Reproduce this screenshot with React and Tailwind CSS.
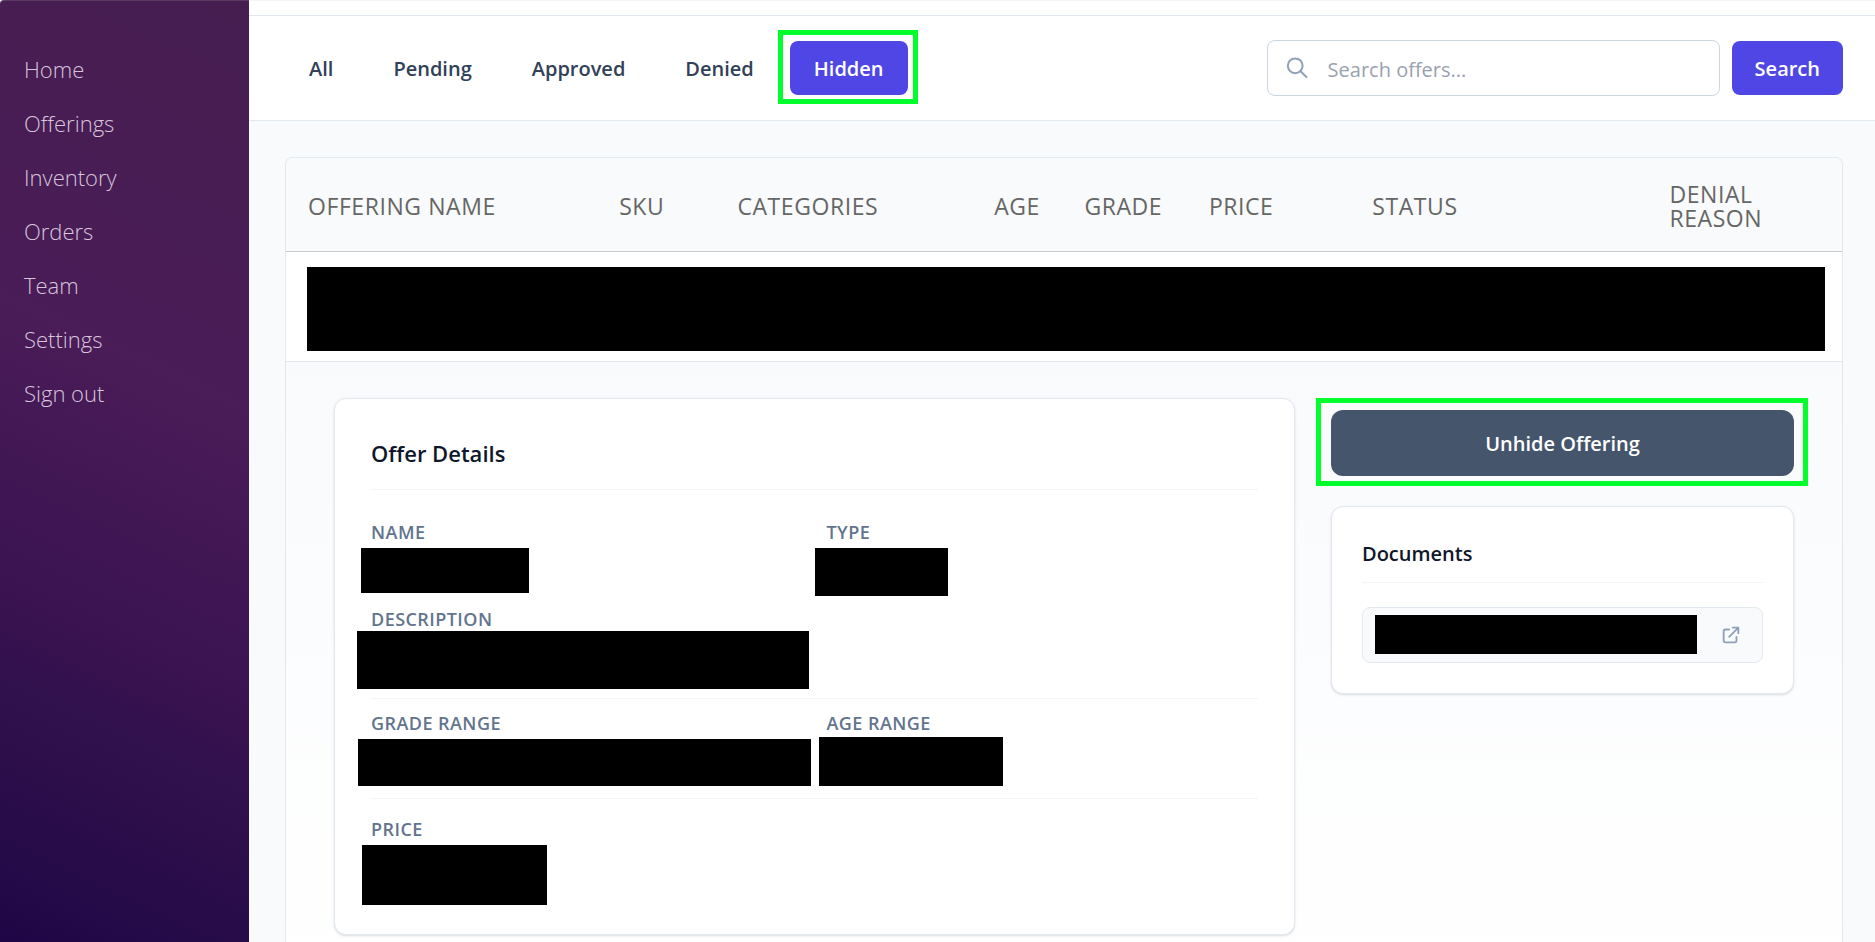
import React from "react";

const navItems = ["Home", "Offerings", "Inventory", "Orders", "Team", "Settings", "Sign out"];
const tabs = ["All", "Pending", "Approved", "Denied", "Hidden"];

const columns = [
  { label: "Offering name", width: "w-[20%]" },
  { label: "SKU", width: "w-[7.6%]" },
  { label: "Categories", width: "w-[16.5%]" },
  { label: "Age", width: "w-[5.8%]" },
  { label: "Grade", width: "w-[8%]" },
  { label: "Price", width: "w-[10.5%]" },
  { label: "Status", width: "w-[19.1%]" },
  { label: "Denial reason", width: "" },
];

function Sidebar() {
  return (
    <aside className="w-[249px] shrink-0 overflow-hidden rounded-tl border-t border-[#5a3a60] bg-[linear-gradient(205deg,#461e50_0%,#4a1c58_39%,#38124f_69%,#32114d_74%,#240a48_93%,#1f0545_100%)]">
      <nav className="flex flex-col pt-[41px]">
        {navItems.map((item) => (
          <a key={item} href="#" className="px-6 text-[22px] leading-[54px] font-light text-[#d8c5dc]">
            {item}
          </a>
        ))}
      </nav>
    </aside>
  );
}

function SearchForm() {
  return (
    <form className="flex items-center gap-3" onSubmit={(e) => e.preventDefault()}>
      <label className="flex h-14 w-[453px] items-center gap-[18px] rounded-lg border border-slate-300 bg-white px-[18px]">
        <svg viewBox="0 0 24 24" className="size-6 shrink-0 text-slate-400" fill="none" stroke="currentColor" strokeWidth="2" strokeLinecap="round">
          <circle cx="9.2" cy="9.8" r="7.4" />
          <path d="M14.6 15.2 20.4 21" />
        </svg>
        <input
          type="text"
          aria-label="Search offers"
          placeholder="Search offers..."
          className="h-full w-full min-w-0 bg-transparent pt-0.5 text-[20px] text-slate-800 outline-none placeholder:text-gray-400"
        />
      </label>
      <button type="submit" className="h-[54px] rounded-lg bg-[#4f46e5] px-[23px] pt-0.5 text-[20px] font-semibold text-white">
        Search
      </button>
    </form>
  );
}

function TopBar() {
  return (
    <header className="flex h-[106px] items-center justify-between border-y border-slate-200 bg-white pr-8 pl-9">
      <div className="flex gap-3">
        {tabs.map((tab) =>
          tab === "Hidden" ? (
            <div key={tab} className="relative">
              <button type="button" className="h-[54px] rounded-lg bg-[#4f46e5] px-6 pt-0.5 text-[20px] font-semibold text-white">
                {tab}
              </button>
              <span className="pointer-events-none absolute -top-[11px] -right-2.5 -bottom-[9px] -left-3 border-5 border-[#00ff2b]" />
            </div>
          ) : (
            <button key={tab} type="button" className="h-[54px] rounded-lg px-6 pt-0.5 text-[20px] font-semibold text-slate-700">
              {tab}
            </button>
          )
        )}
      </div>
      <SearchForm />
    </header>
  );
}

function Field({ label, bar }) {
  return (
    <div>
      <dt className="text-[18px] leading-6 font-semibold tracking-wide text-slate-500 uppercase">{label}</dt>
      <dd className={`bg-black ${bar}`} />
    </div>
  );
}

function OfferDetails() {
  return (
    <section className="h-[537px] rounded-xl border border-slate-200 bg-white px-9 pt-9 shadow-sm">
      <h2 className="border-b border-slate-100 pt-0.5 pb-5 text-[22px] leading-8 font-semibold text-slate-900">Offer Details</h2>
      <dl>
        <div className="grid h-[209px] grid-cols-2 grid-rows-[87px_auto] content-start gap-x-6 border-b border-slate-100 pt-[30px]">
          <Field label="Name" bar="-ml-2.5 mt-1 h-[45px] w-[168px]" />
          <Field label="Type" bar="-ml-3 mt-1 h-12 w-[133px]" />
          <Field label="Description" bar="-ml-3.5 h-[58px] w-[452px]" />
        </div>
        <div className="grid h-[100px] grid-cols-2 gap-x-6 border-b border-slate-100 pt-3">
          <Field label="Grade range" bar="-ml-[13px] mt-1 h-[47px] w-[453px]" />
          <Field label="Age range" bar="-ml-2 mt-0.5 h-[49px] w-[184px]" />
        </div>
        <div className="pt-[18px]">
          <Field label="Price" bar="-ml-[9px] mt-1 h-[60px] w-[185px]" />
        </div>
      </dl>
    </section>
  );
}

function Documents() {
  return (
    <section className="rounded-xl border border-slate-200 bg-white px-[30px] py-[30px] shadow-sm">
      <h3 className="border-b border-slate-100 pt-px pb-3 text-[20px] leading-8 font-semibold text-slate-900">Documents</h3>
      <a href="#" aria-label="Open document" className="mt-6 flex h-14 items-center justify-between rounded-lg border border-slate-200 bg-slate-50 pr-5 pl-3">
        <span className="h-[39px] w-[322px] bg-black" />
        <svg viewBox="0 0 24 24" className="size-[22px] text-slate-400" fill="none" stroke="currentColor" strokeWidth="2" strokeLinecap="round" strokeLinejoin="round">
          <path d="M10 6H6a2 2 0 0 0-2 2v10a2 2 0 0 0 2 2h10a2 2 0 0 0 2-2v-4M14 4h6m0 0v6m0-6L10 14" />
        </svg>
      </a>
    </section>
  );
}

function OfferingsTable() {
  return (
    <div className="overflow-hidden rounded-t-lg border border-b-0 border-slate-200">
      <table className="w-full table-fixed border-collapse">
        <thead>
          <tr className="h-[93px] border-b border-[#c8cacc] bg-slate-50">
            {columns.map((column) => (
              <th
                key={column.label}
                scope="col"
                className={`pt-1 pl-[22px] text-left align-middle text-[23px] leading-6 font-normal tracking-wide text-[#666] uppercase ${column.width}`}
              >
                {column.label}
              </th>
            ))}
          </tr>
        </thead>
        <tbody>
          <tr className="border-b border-slate-200 bg-white">
            <td colSpan={8} className="pt-[15px] pr-[17px] pb-2.5 pl-[21px]">
              <div className="h-[84px] bg-black" />
            </td>
          </tr>
          <tr>
            <td colSpan={8} className="bg-linear-to-b from-slate-50 to-white px-12 pt-9 pb-9 align-top">
              <div className="grid grid-cols-[minmax(0,1fr)_463px] items-start gap-9">
                <OfferDetails />
                <div className="flex flex-col gap-[30px] pt-3">
                  <div className="relative">
                    <button type="button" className="h-[66px] w-full rounded-xl bg-slate-600 pt-0.5 text-[20px] font-semibold text-white">
                      Unhide Offering
                    </button>
                    <span className="pointer-events-none absolute -top-3 -right-3.5 -bottom-2.5 -left-[15px] border-5 border-[#00ff2b]" />
                  </div>
                  <Documents />
                </div>
              </div>
            </td>
          </tr>
        </tbody>
      </table>
    </div>
  );
}

export default function App() {
  return (
    <div className="flex h-screen overflow-hidden bg-slate-50 font-['Open_Sans','Noto_Sans',sans-serif]">
      <Sidebar />
      <main className="min-w-0 flex-1 overflow-hidden">
        <div className="h-[15px] border-t border-gray-100 bg-white" />
        <TopBar />
        <div className="pt-9 pr-8 pl-9">
          <OfferingsTable />
        </div>
      </main>
    </div>
  );
}
